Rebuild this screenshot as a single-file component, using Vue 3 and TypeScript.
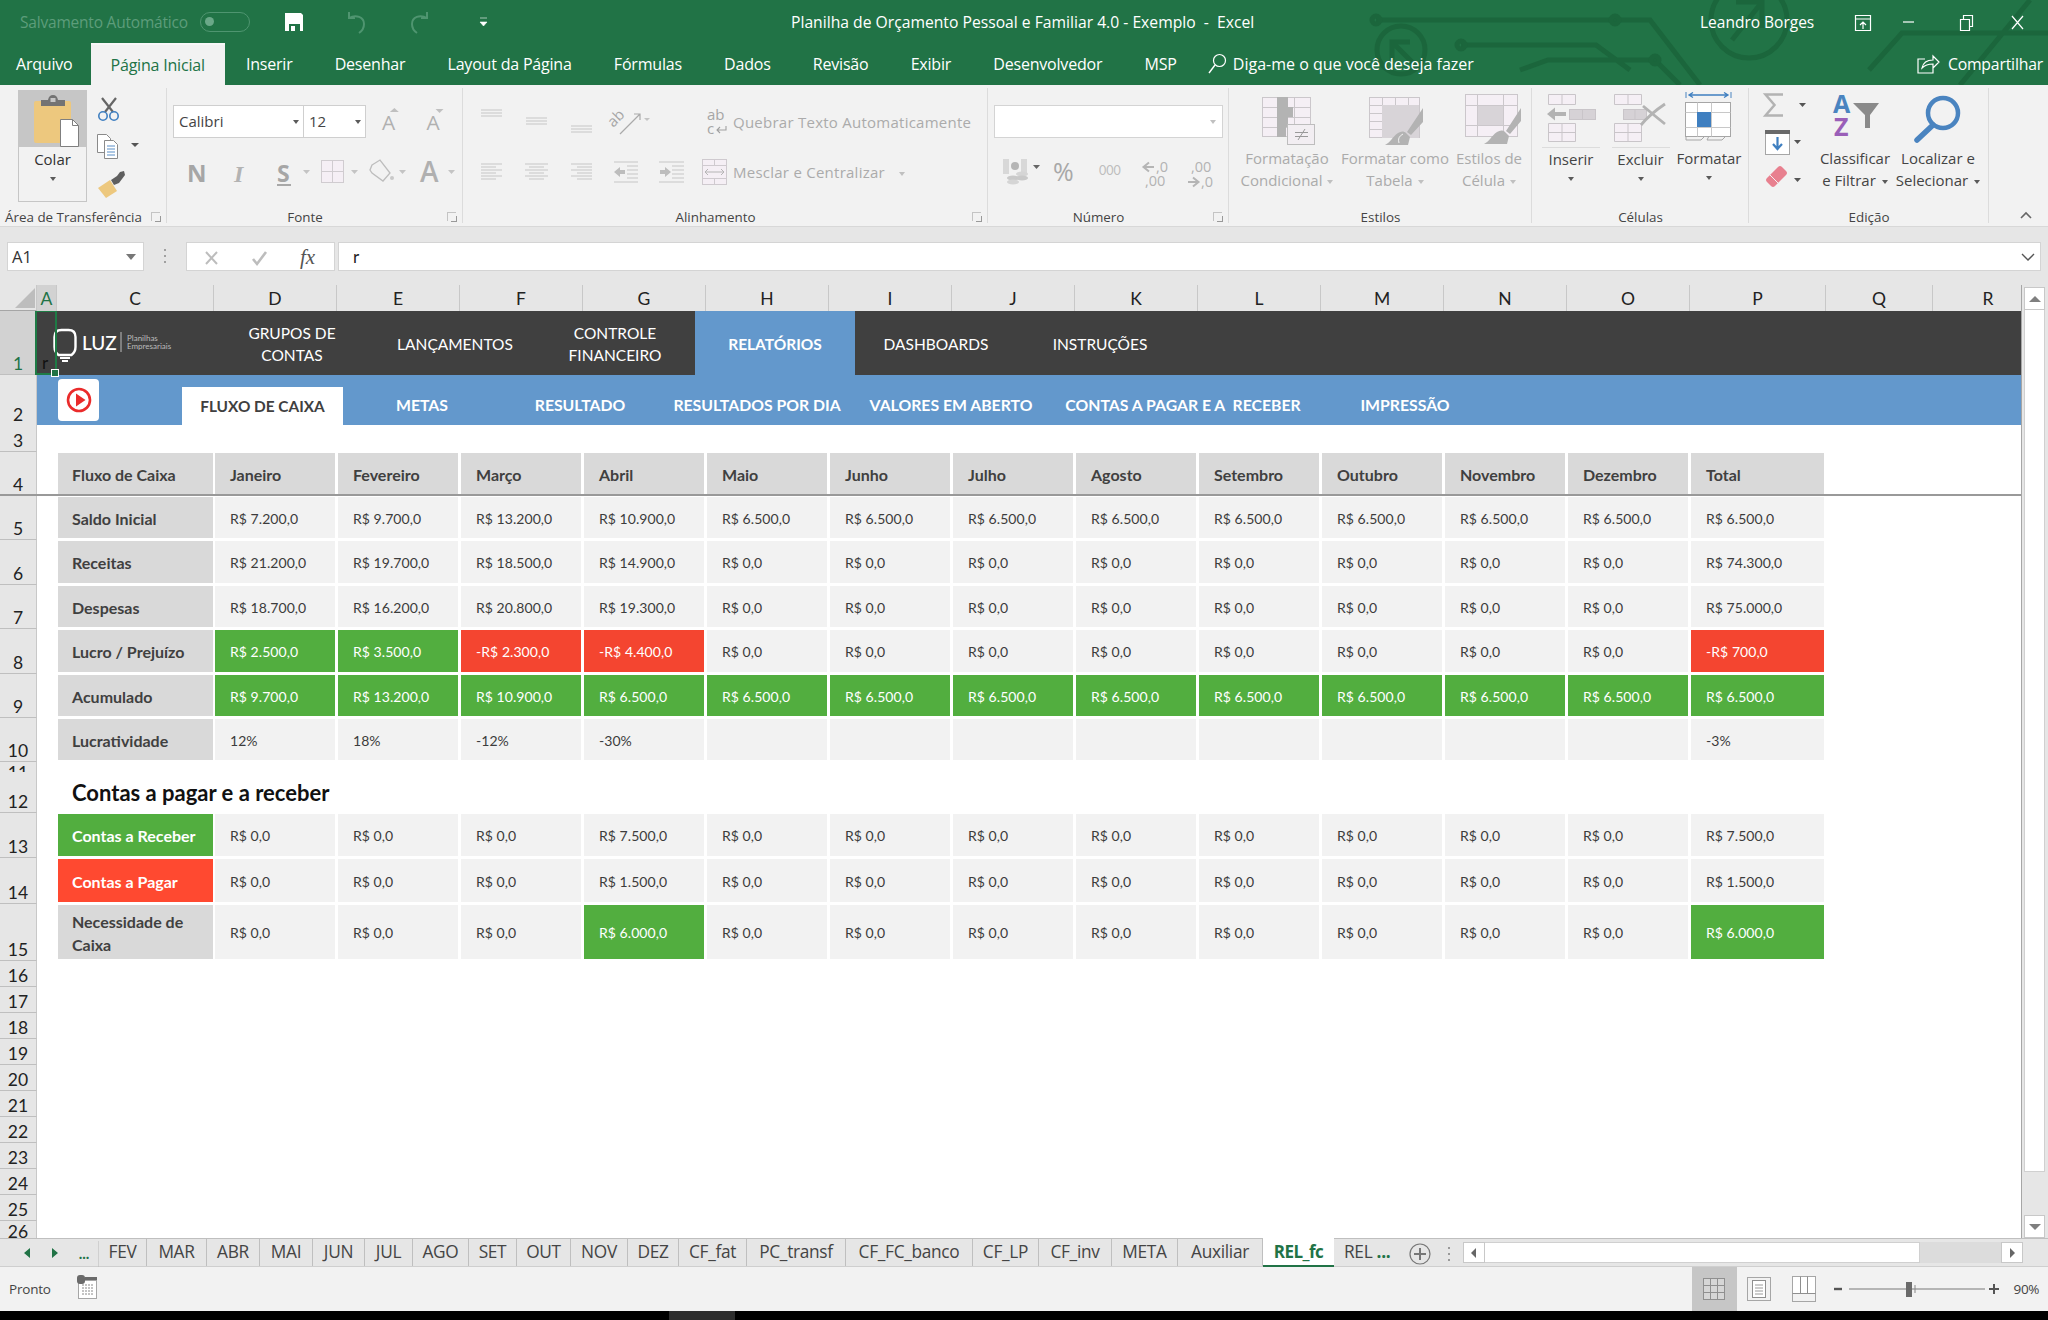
<template>
  <div class="app">
    <!-- titlebar + tabs share the green -->
    <div class="head">
      <svg class="circuit" width="760" height="85" viewBox="1288 0 760 85">
        <g fill="none" stroke="#1b663c" stroke-width="5">
          <path d="M1376 20H1650L1700 85M1461 45H1596L1630 70M1520 70L1548 60H1655L1680 85" />
          <circle cx="1376" cy="20" r="4" /><circle cx="1615" cy="20" r="4" />
          <circle cx="1461" cy="45" r="4" /><circle cx="1655" cy="60" r="4" />
          <circle cx="1401" cy="50" r="24" /><path d="M1392 60V42H1410M1392 42L1416 66" />
          <circle cx="1749" cy="20" r="38" /><path d="M1736 2H1762V28M1762 2L1732 40" />
          <path d="M1869 70L1902 33H2048M1960 85L2030 0" />
        </g>
      </svg>
      <div class="titlebar">
        <span class="autosave">Salvamento Automático</span>
        <span class="toggle"><i></i></span>
        <svg class="qa" width="240" height="24" viewBox="0 0 240 24">
          <path d="M1 3h16l2 2v16H1z" fill="#fff" /><path d="M5 14h11v7H5z" fill="#217346" /><path d="M7 16h4v5H7z" fill="#fff" />
          <path d="M71 7H65V1M65 7c7-4 15-1 15 6 0 4-2 7-5 9" transform="translate(0 1)" fill="none" stroke="#4f9570" stroke-width="2" />
          <path d="M137 7h6V1M143 7c-7-4-15-1-15 6 0 4 2 7 5 9" transform="translate(0 1)" fill="none" stroke="#4f9570" stroke-width="2" />
          <path d="M196 8h7M196 12h7l-3.500 4z" fill="#fff" stroke="#fff" stroke-width=".6" />
        </svg>
        <span class="doc-title">Planilha de Orçamento Pessoal e Familiar 4.0 - Exemplo &nbsp;-&nbsp; Excel</span>
        <span class="user">Leandro Borges</span>
        <svg class="win" width="198" height="24" viewBox="1850 8 198 24">
          <g fill="none" stroke="#fff" stroke-width="1.200">
            <path d="M1857.500 13.500h15v15h-15zM1857.500 17h15M1865 27v-7M1862 23l3-3 3 3" />
            <path d="M1905 20h11" />
            <path d="M1962.500 17.500h9v11h-9zM1965.500 17v-3.500h9v11H1972" />
            <path d="M2014 14l11 13M2025 14l-11 13" />
          </g>
        </svg>
      </div>
      <div class="tabsrow">
        <span v-for="t in menu" :key="t" class="menu" :class="{ active: t === 'Página Inicial' }">{{ t }}</span>
        <svg class="tell-icon" width="20" height="22" viewBox="0 0 20 22">
          <circle cx="12.500" cy="7.500" r="6" fill="none" stroke="#fff" stroke-width="1.200" /><path d="M8 12L2 20" stroke="#fff" stroke-width="1.400" />
        </svg>
        <span class="tell">Diga-me o que você deseja fazer</span>
        <svg class="share-icon" width="24" height="22" viewBox="0 0 24 22">
          <path d="M9 6H2v14h15v-7M6 15c1-5 5-8 11-8V3l6 6-6 6v-4c-5 0-8 1-11 4z" fill="none" stroke="#fff" stroke-width="1.200" />
        </svg>
        <span class="share">Compartilhar</span>
      </div>
    </div>

    <!-- ribbon -->
    <div class="ribbon">
      <section class="grp g-clip">
        <div class="body">
          <div class="paste">
            <svg class="paste-top" width="67" height="56" viewBox="0 0 67 56">
              <rect x="15" y="10" width="37" height="42" rx="2" fill="#edc87e" />
              <path d="M22 15v-6h7q1-5 5-5t5 5h7v6z" fill="#737373" /><rect x="31.500" y="7" width="5" height="4" fill="#c6c6c6" />
              <path d="M41.500 28.500h12l6 6v21h-18z" fill="#fff" stroke="#7f7f7f" /><path d="M53.500 28.500v6h6" fill="none" stroke="#7f7f7f" />
            </svg>
            <span class="paste-label">Colar</span>
            <span class="caret dark"></span>
          </div>
          <svg width="56" height="112" viewBox="0 0 56 112">
            <path d="M15 8l11 14M29 8L18 22" stroke="#666" stroke-width="2.200" />
            <circle cx="16" cy="26" r="4.200" fill="none" stroke="#3f7fc0" stroke-width="1.600" /><circle cx="27" cy="26" r="4.200" fill="none" stroke="#3f7fc0" stroke-width="1.600" />
            <path d="M10.500 44.500h9l4 4v14h-13z" fill="#fff" stroke="#8a8a8a" />
            <path d="M17.500 50.500h9l4 4v14h-13z" fill="#fff" stroke="#8a8a8a" />
            <path d="M20 56h8M20 59h8M20 62h8M20 65h8" stroke="#5b8fc7" />
            <path d="M44 53h8l-4 4z" fill="#555" />
            <path d="M11 98l12-8 7 11-11 7z" fill="#edc87e" /><path d="M24 90l6-4 3-4 4-1 1 4-3 4-3 4-5 2z" fill="#5f5f5f" />
          </svg>
        </div>
        <div class="glabel">Área de Transferência<i class="launcher"></i></div>
      </section>

      <section class="grp g-font">
        <div class="body col">
          <div class="r1">
            <div class="fontbox">
              <span class="fb-name">Calibri<i class="caret dark"></i></span>
              <span class="fb-size">12<i class="caret dark"></i></span>
            </div>
            <svg width="90" height="34" viewBox="0 0 90 34">
              <text x="8" y="25" class="ic-a">A</text><path d="M16 7h9l-4.500-4z" fill="#c0c0c0" />
              <text x="53" y="25" class="ic-a">A</text><path d="M62 4h8l-4 4z" fill="#c0c0c0" />
            </svg>
          </div>
          <svg class="font-row2" width="296" height="36" viewBox="0 0 296 36">
            <text x="20" y="25" class="ic-b">N</text>
            <text x="67" y="25" class="ic-i">I</text>
            <text x="110" y="25" class="ic-s">S</text><path d="M110 28h14" stroke="#a8a8a8" stroke-width="2" />
            <path d="M136 13h7l-3.500 4zM184 13h7l-3.500 4zM232 13h7l-3.500 4zM281 13h7l-3.500 4z" fill="#c4c4c4" />
            <rect x="154.500" y="3.500" width="22" height="22" fill="#f5eff5" stroke="#d0ccd0" /><path d="M165.500 3.500v22M154.500 14.500h22" stroke="#d0ccd0" />
            <path d="M205 8l8-5 10 13-7 8-11-8-2-3z" fill="none" stroke="#bdbdbd" stroke-width="1.300" /><circle cx="225" cy="21" r="2" fill="#c9c9c9" />
            <text x="253" y="25" class="ic-big">A</text>
          </svg>
        </div>
        <div class="glabel shift">Fonte<i class="launcher"></i></div>
      </section>

      <section class="grp g-align">
        <div class="body col">
          <div class="al-row">
            <svg width="268" height="34" viewBox="0 0 268 34">
              <g stroke="#c6c6c6" stroke-width="1.200">
                <path d="M18 5h21M18 8h21M18 11h21M63 13h21M63 16h21M63 19h21M108 21h21M108 24h21M108 27h21" />
              </g>
              <text transform="rotate(-45 158 18)" x="149" y="16" class="ic-ab">ab</text>
              <path d="M157 29L177 9M171 9h6v6" fill="none" stroke="#aaa" stroke-width="1.200" /><path d="M181 13h6l-3 3z" fill="#c4c4c4" />
              <text x="244" y="15" class="ic-ab">ab</text><text x="244" y="29" class="ic-ab">c</text>
              <path d="M263 21v4h-9M257 22l-3 3 3 3" fill="none" stroke="#a0a0a0" stroke-width="1.100" />
            </svg>
            <span class="al-text">Quebrar Texto Automaticamente</span>
          </div>
          <div class="al-row second">
            <svg width="268" height="34" viewBox="0 0 268 34">
              <g stroke="#c6c6c6" stroke-width="1.200" fill="none">
                <path d="M18 9h21M18 12h15M18 15h21M18 18h15M18 21h21M18 24h15" />
                <path d="M62 9h23M66 12h15M62 15h23M66 18h15M62 21h23M66 24h15" />
                <path d="M108 9h21M114 12h15M108 15h21M114 18h15M108 21h21M114 24h15" />
                <path d="M151 7h24M164 11h11M164 15h11M164 19h11M164 23h11M151 27h24" />
                <path d="M196 7h25M209 11h12M209 15h12M209 19h12M209 23h12M196 27h25" />
              </g>
              <path d="M151 17l6-5v3h5v4h-5v3zM208 17l-6-5v3h-5v4h5v3z" fill="#bdbdbd" />
              <rect x="239.500" y="4.500" width="24" height="25" fill="#f5eff5" stroke="#cfcacf" />
              <path d="M239.500 10.500h24M239.500 23.500h24M251.500 4.500v6M251.500 23.500v6" stroke="#cfcacf" />
              <path d="M242 17h19M245 14l-3 3 3 3M258 14l3 3-3 3" fill="none" stroke="#b5b5b5" />
            </svg>
            <span class="al-text merge">Mesclar e Centralizar<i class="caret"></i></span>
          </div>
        </div>
        <div class="glabel shift">Alinhamento<i class="launcher"></i></div>
      </section>

      <section class="grp g-num">
        <div class="body col">
          <div class="numbox"><i class="caret"></i></div>
          <svg class="num-row" width="240" height="36" viewBox="0 0 240 36">
            <rect x="15" y="4" width="24" height="15" fill="#d8d8d8" /><rect x="21" y="4" width="12" height="15" fill="#f2f2f2" /><circle cx="27" cy="11" r="4" fill="#b5b5b5" />
            <ellipse cx="25" cy="23" rx="6" ry="2.500" fill="#c9c9c9" /><ellipse cx="25" cy="27" rx="6" ry="2.500" fill="#d5d5d5" /><ellipse cx="34" cy="19" rx="6" ry="2.500" fill="#d5d5d5" /><ellipse cx="34" cy="23" rx="6" ry="2.500" fill="#c9c9c9" />
            <path d="M45 10h7l-3.500 4z" fill="#666" />
            <text x="65" y="26" class="ic-pct">%</text>
            <text x="111" y="20" class="ic-zero">000</text>
            <path d="M156 12h10M161 7.500L155.500 12l5.500 4.500" fill="none" stroke="#b5b5b5" stroke-width="2" />
            <text x="168" y="17" class="ic-dec">,0</text><text x="157" y="31" class="ic-dec">,00</text>
            <text x="203" y="17" class="ic-dec">,00</text>
            <path d="M200 27h10M205 22.500l5.500 4.500-5.500 4.500" fill="none" stroke="#b5b5b5" stroke-width="2" /><text x="213" y="32" class="ic-dec">,0</text>
          </svg>
        </div>
        <div class="glabel shift">Número<i class="launcher"></i></div>
      </section>

      <section class="grp g-style">
        <div class="body">
          <div class="bigbtn st1 off">
            <svg width="54" height="52" viewBox="0 0 54 52">
              <rect x=".5" y=".5" width="48" height="39" fill="#f5eff5" stroke="#cbc7cb" />
              <path d="M.5 10.500h48M.5 20.500h48M.5 30.500h48M16.500.5v39M32.500.5v39" stroke="#cbc7cb" />
              <path d="M15 0h11v10h5v10h-5v10h-2v10h-9z" fill="#b3b3b3" />
              <rect x="25.500" y="27.500" width="27" height="20" fill="#f2eef2" stroke="#bdbdbd" />
              <path d="M33 35.500h13M33 39.500h13M36 43l7-11" stroke="#999" fill="none" />
            </svg>
            <span>Formatação</span><span>Condicional<i class="caret"></i></span>
          </div>
          <div class="bigbtn st2 off">
            <svg width="54" height="52" viewBox="0 0 54 52">
              <rect x=".5" y=".5" width="50" height="40" fill="#f5eff5" stroke="#cbc7cb" />
              <path d="M.5 8.500h50M.5 16.500h50M.5 24.500h50M.5 32.500h50M13.500.5v40M26.500.5v40M39.500.5v40" stroke="#cbc7cb" />
              <rect x="13" y="8" width="37" height="33" fill="#d8d4d8" />
              <path d="M54 11v14L42 38l-4-3zM37 36l4 4-2 8H16c6-3 7-8 13-12 3-2 6-2 8 0z" fill="#b3b3b3" />
              <path d="M30 46q-2-6 4-9" stroke="#f2f2f2" fill="none" />
            </svg>
            <span>Formatar como</span><span>Tabela<i class="caret"></i></span>
          </div>
          <div class="bigbtn st3 off">
            <svg width="56" height="54" viewBox="0 0 56 54">
              <rect x=".5" y=".5" width="52" height="42" fill="#f5eff5" stroke="#cbc7cb" />
              <path d="M.5 11.500h52M.5 31.500h52M12.500.5v42M38.500.5v42" stroke="#cbc7cb" />
              <rect x="13" y="12" width="25" height="19" fill="#d8d4d8" />
              <path d="M56 14v13L45 40l-4-3zM40 38l4 4-2 8H19c6-3 7-8 13-12 3-2 6-2 8 0z" fill="#b3b3b3" />
            </svg>
            <span>Estilos de</span><span>Célula<i class="caret"></i></span>
          </div>
        </div>
        <div class="glabel">Estilos</div>
      </section>

      <section class="grp g-cells">
        <div class="body">
          <div class="bigbtn cell1">
            <svg width="52" height="52" viewBox="0 0 52 52">
              <path d="M3.500.5h27v10h-27zM17 .5v10M3.500 29.500h27v18h-27zM17 29.500v18M3.500 38.500h27" fill="#f5eff5" stroke="#c9c5c9" />
              <rect x="24.500" y="15.500" width="26" height="10" fill="#d6d2d6" stroke="#c9c5c9" /><path d="M37.500 15.500v10" stroke="#c9c5c9" />
              <path d="M2 20l8-6.500v4.500h11v4H10v4.500z" fill="#b3b3b3" />
            </svg>
            <em class="rule"></em>
            <span>Inserir</span><i class="caret dark"></i>
          </div>
          <div class="bigbtn cell2">
            <svg width="54" height="52" viewBox="0 0 54 52">
              <path d="M.5.5h27v10H.5zM14 .5v10M.5 29.500h27v18H.5zM14 29.500v18M.5 38.500h27" fill="#f5eff5" stroke="#c9c5c9" />
              <rect x="9.500" y="15.500" width="23" height="10" fill="#d6d2d6" stroke="#c9c5c9" /><path d="M21 15.500v10" stroke="#c9c5c9" />
              <path d="M29 12q12 10 22 18M51 10Q36 20 27 31" fill="none" stroke="#b3b3b3" stroke-width="2.800" />
            </svg>
            <em class="rule"></em>
            <span>Excluir</span><i class="caret dark"></i>
          </div>
          <div class="bigbtn cell3">
            <svg width="48" height="52" viewBox="0 0 48 52">
              <path d="M1 0v6M46 0v6" stroke="#4a84c0" /><path d="M4 3h39M8 .5L4 3l4 2.500M39 .5L43 3l-4 2.500" fill="none" stroke="#3f7fc0" stroke-width="1.300" />
              <rect x=".5" y="10.500" width="45" height="34" fill="#fff" stroke="#a6a6a6" />
              <path d="M.5 20.500h45M.5 35.500h45M12.500 10.500v34M26.500 10.500v34" stroke="#c8c8c8" />
              <rect x="12" y="20" width="14" height="15" fill="#3f7fc0" />
              <path d="M1 44v4h15l4-4M24 44l-2 4h15l4-4" fill="none" stroke="#a6a6a6" />
            </svg>
            <span>Formatar</span><i class="caret dark"></i>
          </div>
        </div>
        <div class="glabel">Células</div>
      </section>

      <section class="grp g-edit">
        <div class="body">
          <svg class="edit-small" width="70" height="112" viewBox="0 0 70 112">
            <path d="M35 5.500H17.500l9 10.500-9 10.500H35" transform="translate(-1 -1)" fill="none" stroke="#b3b3b3" stroke-width="2.500" />
            <path d="M50 13h7l-3.500 4z" fill="#555" />
            <rect x="16.500" y="40.500" width="24" height="24" fill="#fff" stroke="#a6a6a6" /><rect x="16" y="40" width="25" height="4" fill="#6a6a6a" />
            <path d="M28.500 47v11M24 54l4.500 5 4.500-5" fill="none" stroke="#3f7fc0" stroke-width="2.200" />
            <path d="M45 50h7l-3.500 4z" fill="#555" />
            <path d="M18 88l11-11q2-2 4 0l4 4q2 2 0 4L26 96q-2 2-4 0l-4-4q-2-2 0-4z" fill="#e8808f" /><path d="M21 85l8 8" stroke="#f5f0f0" />
            <path d="M45 88h7l-3.500 4z" fill="#555" />
          </svg>
          <div class="bigbtn sort">
            <svg width="52" height="52" viewBox="0 0 52 52">
              <text x="4" y="19" class="ic-az blue">A</text><text x="5" y="42" class="ic-az purple">Z</text>
              <path d="M24 9h26L41 21v13h-5V21z" fill="#8a8a8a" />
            </svg>
            <span>Classificar</span><span>e Filtrar<i class="caret dark"></i></span>
          </div>
          <div class="bigbtn find">
            <svg width="52" height="52" viewBox="0 0 52 52">
              <circle cx="31" cy="19" r="15" fill="none" stroke="#4a84c0" stroke-width="4.500" />
              <path d="M21 31L5 46" stroke="#4a84c0" stroke-width="5.500" stroke-linecap="round" />
            </svg>
            <span>Localizar e</span><span>Selecionar<i class="caret dark"></i></span>
          </div>
        </div>
        <div class="glabel">Edição</div>
      </section>
      <svg class="collapse" width="14" height="10" viewBox="0 0 14 10"><path d="M2 8l5-5 5 5" fill="none" stroke="#666" stroke-width="1.600" /></svg>
    </div>

    <!-- formula bar -->
    <div class="fbar">
      <div class="namebox">A1<i class="caret big"></i></div>
      <span class="dots"></span>
      <div class="fxbtns">
        <svg width="149" height="29" viewBox="0 0 149 29">
          <path d="M19 9l11 12M30 9L19 21" stroke="#bdbdbd" stroke-width="2" fill="none" />
          <path d="M66 16l4 5 9-12" stroke="#bdbdbd" stroke-width="2.600" fill="none" />
          <text x="113" y="21" class="ic-fx">fx</text>
        </svg>
      </div>
      <div class="finput">r<svg class="fchev" width="16" height="10" viewBox="0 0 16 10"><path d="M2 2l6 6 6-6" fill="none" stroke="#555" stroke-width="1.400" /></svg></div>
    </div>

    <!-- grid -->
    <div class="workspace">
      <div class="gridcol">
        <div class="colhdr">
          <div class="corner"><svg width="37" height="26" viewBox="0 0 37 26"><path d="M35 3v20H15z" fill="#bdbdbd" /></svg></div>
          <div v-for="c in colLetters" :key="c" class="ch" :class="{ sel: c === 'A' }">{{ c }}</div>
        </div>
        <div class="sheet">
          <div class="a1box"><span>r</span><i></i></div>
          <div v-for="r in rows" :key="r.n" class="row" :class="{ frozen: r.n === 4 }" :style="{ height: r.h + 'px' }">
            <div class="rh" :class="{ sel: r.n === 1 }"><span>{{ r.n }}</span></div>

            <div v-if="r.n === 1" class="nav1">
              <svg class="logo" width="177" height="64" viewBox="37 311 177 64">
                <path d="M54.500 337q0-7 7-7h7q7 0 7 7v10q0 5-4 8H58.500q-4-3-4-8z" fill="none" stroke="#fff" stroke-width="2.400" />
                <path d="M60 358h10M62 361h6" stroke="#fff" stroke-width="1.800" />
                <text x="82" y="350" class="luz">LUZ</text>
                <path d="M121 332v20" stroke="#bbb" />
                <text x="127" y="341" class="luz-s">Planilhas</text><text x="127" y="349" class="luz-s">Empresariais</text>
              </svg>
              <div v-for="n in nav1" :key="n.t" class="nav1-item" :class="{ on: n.on }" :style="{ width: n.w + 'px', marginLeft: (n.ml || 0) + 'px' }">
                <span v-for="l in n.t.split('|')" :key="l">{{ l }}</span>
              </div>
            </div>

            <div v-else-if="r.n === 2" class="nav2">
              <div class="playbtn">
                <svg width="26" height="26" viewBox="0 0 26 26"><circle cx="13" cy="13" r="11" fill="none" stroke="#ea2b2b" stroke-width="2.600" /><path d="M10 6.500L19.500 13 10 19.500z" fill="#ea2b2b" /></svg>
              </div>
              <div class="nav2-on">FLUXO DE CAIXA</div>
              <div v-for="n in nav2" :key="n.t" class="nav2-item" :style="{ width: n.w + 'px' }">{{ n.t }}</div>
            </div>

            <template v-else-if="r.label">
              <div class="a-col"></div>
              <div class="cell label" :class="[r.lc, { wrap: r.n === 15 }]"><span>{{ r.label }}</span></div>
              <div v-for="(c, i) in r.cells" :key="i" class="cell" :class="[c.k, { hd: r.n === 4 }]">{{ c.t }}</div>
            </template>

            <div v-else-if="r.n === 12" class="sect">Contas a pagar e a receber</div>
          </div>
        </div>
      </div>
      <div class="vscroll">
        <div class="vbtn"><svg width="14" height="8" viewBox="0 0 14 8"><path d="M1 7l6-6 6 6z" fill="#7f7f7f" /></svg></div>
        <div class="vthumb"></div>
        <div class="vbtn low"><svg width="14" height="8" viewBox="0 0 14 8"><path d="M1 1l6 6 6-6z" fill="#7f7f7f" /></svg></div>
      </div>
    </div>

    <!-- sheet tabs -->
    <div class="tabstrip">
      <svg class="tabnav" width="99" height="29" viewBox="0 0 99 29">
        <path d="M30 9v10l-6-5zM52 9v10l6-5z" fill="#217346" />
        <text x="84" y="20" class="ic-more">...</text>
        <path d="M99 2v26" stroke="#bbb" />
      </svg>
      <div v-for="t in sheets" :key="t.t" class="stab" :class="{ active: t.on }" :style="{ width: t.w + 'px' }">{{ t.t }}</div>
      <span class="stab more">REL <b>...</b></span>
      <svg class="addsheet" width="56" height="29" viewBox="0 0 56 29">
        <circle cx="12" cy="15" r="10" fill="none" stroke="#777" stroke-width="1.200" /><path d="M12 9v12M6 15h12" stroke="#777" stroke-width="2" />
        <path d="M41 8v2M41 14v2M41 20v2" stroke="#999" stroke-width="2" />
      </svg>
      <div class="hscroll">
        <div class="hbtn"><svg width="6" height="10" viewBox="0 0 6 10"><path d="M5 0v10L0 5z" fill="#666" /></svg></div>
        <div class="hthumb"></div>
        <div class="htrack"></div>
        <div class="hbtn"><svg width="6" height="10" viewBox="0 0 6 10"><path d="M1 0v10l5-5z" fill="#666" /></svg></div>
      </div>
    </div>

    <!-- status -->
    <div class="status">
      <span class="ready">Pronto</span>
      <svg class="macro" width="22" height="26" viewBox="0 0 22 26">
        <rect x="2.500" y="6.500" width="18" height="18" fill="#fff" stroke="#a6a6a6" />
        <rect x="1" y="1" width="8" height="9" rx="3" fill="#6a6a6a" /><path d="M9 3h12v3H9z" fill="#6a6a6a" />
        <path d="M6 11h11M6 14h11M6 17h11M6 20h11" stroke="#888" stroke-dasharray="2 1" />
      </svg>
      <div class="views">
        <div class="view on">
          <svg width="22" height="22" viewBox="0 0 22 22"><rect x=".5" y=".5" width="21" height="21" fill="#d6d6d6" stroke="#8f8f8f" /><path d="M.5 7.500h21M.5 14.500h21M7.500.5v21M14.500.5v21" stroke="#8f8f8f" /></svg>
        </div>
        <svg class="view-i" width="24" height="24" viewBox="0 0 24 24"><rect x=".5" y=".5" width="23" height="23" fill="#f2f2f2" stroke="#a6a6a6" /><rect x="5.500" y="3.500" width="13" height="17" fill="#fff" stroke="#8f8f8f" /><path d="M8 8h8M8 11h8M8 14h8M8 17h8" stroke="#9a9a9a" /></svg>
        <svg class="view-i" width="24" height="26" viewBox="0 0 24 26"><rect x=".5" y=".5" width="23" height="25" fill="#fff" stroke="#a6a6a6" /><path d="M8.500 .5v17M15.500 .5v17M.5 17.500h23" stroke="#8f8f8f" /><rect x="1" y="18" width="22" height="7" fill="#f2f2f2" /></svg>
      </div>
      <svg class="zoom" width="166" height="20" viewBox="0 0 166 20">
        <path d="M0 10h8" stroke="#555" stroke-width="2.400" />
        <path d="M15 10h136" stroke="#b5b5b5" stroke-width="2" />
        <path d="M81 6v8" stroke="#888" /><rect x="72" y="3" width="6" height="15" fill="#6a6a6a" />
        <path d="M155 10h10M160 5v10" stroke="#555" stroke-width="2" />
      </svg>
      <span class="pct">90%</span>
    </div>
    <div class="blackbar"><i></i></div>
  </div>
</template>

<script setup lang="ts">
interface Cell { t: string; k?: string }
interface Row { n: number; h: number; label?: string; lc?: string; cells?: Cell[] }

const menu = ['Arquivo', 'Página Inicial', 'Inserir', 'Desenhar', 'Layout da Página', 'Fórmulas', 'Dados', 'Revisão', 'Exibir', 'Desenvolvedor', 'MSP']
const colLetters = ['A', 'C', 'D', 'E', 'F', 'G', 'H', 'I', 'J', 'K', 'L', 'M', 'N', 'O', 'P', 'Q', 'R']

const nav1 = [
  { t: 'GRUPOS DE|CONTAS', w: 156 },
  { t: 'LANÇAMENTOS', w: 170 },
  { t: 'CONTROLE|FINANCEIRO', w: 150 },
  { t: 'RELATÓRIOS', w: 160, on: true, ml: 5 },
  { t: 'DASHBOARDS', w: 162 },
  { t: 'INSTRUÇÕES', w: 166 }
]
const nav2 = [
  { t: 'METAS', w: 158 },
  { t: 'RESULTADO', w: 158 },
  { t: 'RESULTADOS POR DIA', w: 196 },
  { t: 'VALORES EM ABERTO', w: 192 },
  { t: 'CONTAS A PAGAR E A  RECEBER', w: 272 },
  { t: 'IMPRESSÃO', w: 172 }
]
const sheets = [
  { t: 'FEV', w: 48 }, { t: 'MAR', w: 60 }, { t: 'ABR', w: 53 }, { t: 'MAI', w: 53 }, { t: 'JUN', w: 52 },
  { t: 'JUL', w: 48 }, { t: 'AGO', w: 56 }, { t: 'SET', w: 48 }, { t: 'OUT', w: 54 }, { t: 'NOV', w: 57 },
  { t: 'DEZ', w: 51 }, { t: 'CF_fat', w: 68 }, { t: 'PC_transf', w: 99 }, { t: 'CF_FC_banco', w: 127 },
  { t: 'CF_LP', w: 66 }, { t: 'CF_inv', w: 73 }, { t: 'META', w: 66 }, { t: 'Auxiliar', w: 85 }, { t: 'REL_fc', w: 71, on: true }
]

const money = (v: string) => (v.startsWith('-') ? '-R$ ' + v.slice(1) + ',0' : 'R$ ' + v + ',0')
// "g" / "r" suffix after the value marks the conditional fill
function line(vals: string[]): Cell[] {
  return vals.map((v) => {
    const m = v.match(/^(.*)\s([gr])$/)
    return m ? { t: money(m[1]), k: m[2] } : { t: money(v) }
  })
}
const rep = (v: string, n: number) => Array<string>(n).fill(v)

const heads = ['Janeiro', 'Fevereiro', 'Março', 'Abril', 'Maio', 'Junho', 'Julho', 'Agosto', 'Setembro', 'Outubro', 'Novembro', 'Dezembro', 'Total']

const rows: Row[] = [
  { n: 1, h: 64 },
  { n: 2, h: 50 },
  { n: 3, h: 27 },
  { n: 4, h: 44, label: 'Fluxo de Caixa', cells: heads.map((t) => ({ t })) },
  { n: 5, h: 44, label: 'Saldo Inicial', cells: line(['7.200', '9.700', '13.200', '10.900', ...rep('6.500', 9)]) },
  { n: 6, h: 45, label: 'Receitas', cells: line(['21.200', '19.700', '18.500', '14.900', ...rep('0', 8), '74.300']) },
  { n: 7, h: 44, label: 'Despesas', cells: line(['18.700', '16.200', '20.800', '19.300', ...rep('0', 8), '75.000']) },
  { n: 8, h: 45, label: 'Lucro / Prejuízo', cells: line(['2.500 g', '3.500 g', '-2.300 r', '-4.400 r', ...rep('0', 8), '-700 r']) },
  { n: 9, h: 44, label: 'Acumulado', cells: line(['9.700 g', '13.200 g', '10.900 g', ...rep('6.500 g', 10)]) },
  { n: 10, h: 44, label: 'Lucratividade', cells: [{ t: '12%' }, { t: '18%' }, { t: '-12%' }, { t: '-30%' }, ...rep('', 8).map((t) => ({ t })), { t: '-3%' }] },
  { n: 11, h: 10 },
  { n: 12, h: 41 },
  { n: 13, h: 45, label: 'Contas a Receber', lc: 'lg', cells: line(['0', '0', '0', '7.500', ...rep('0', 8), '7.500']) },
  { n: 14, h: 46, label: 'Contas a Pagar', lc: 'lr', cells: line(['0', '0', '0', '1.500', ...rep('0', 8), '1.500']) },
  { n: 15, h: 57, label: 'Necessidade de Caixa', cells: line(['0', '0', '0', '6.000 g', ...rep('0', 8), '6.000 g']) },
  ...Array.from({ length: 10 }, (_, i) => ({ n: 16 + i, h: 26 })),
  { n: 26, h: 17 }
]
</script>

<style>
html, body { margin: 0; background: #e6e6e6; }
</style>

<style scoped>
.app {
  width: 2048px;
  height: 1320px;
  display: flex;
  flex-direction: column;
  overflow: hidden;
  font-family: "Open Sans", "Noto Sans", sans-serif;
  color: #333;
  background: #e6e6e6;
}
i, em { font-style: normal; }

/* head */
.head { position: relative; height: 85px; background: #217346; color: #fff; flex: none; }
.circuit { position: absolute; left: 1288px; top: 0; }
.titlebar { position: relative; height: 43px; display: flex; align-items: center; }
.autosave { margin-left: 20px; width: 180px; font-size: 15.500px; letter-spacing: -.2px; color: #5d9d7b; white-space: nowrap; }
.toggle { width: 50px; height: 20px; border: 1px solid #4f9570; border-radius: 11px; display: flex; align-items: center; padding-left: 4px; box-sizing: border-box; }
.toggle i { width: 9px; height: 9px; border-radius: 50%; background: #6aa888; }
.qa { margin-left: 34px; }
.doc-title { margin-left: 267px; font-size: 15.700px; white-space: nowrap; width: 909px; }
.user { font-size: 15.500px; white-space: nowrap; width: 148px; }
.tabsrow { position: relative; height: 42px; display: flex; align-items: stretch; }
.menu { padding: 0 21.100px; font-size: 16px; line-height: 42px; white-space: nowrap; letter-spacing: -.2px; }
.menu:first-child { padding-left: 16px; padding-right: 18px; }
.menu.active { background: #f2f2f2; color: #217346; padding: 0 20px; border-top: 2px solid #f7f7f7; line-height: 40px; }
.tell-icon { margin-left: 9px; align-self: center; }
.tell { margin-left: 6px; font-size: 16px; line-height: 42px; white-space: nowrap; }
.share-icon { margin-left: auto; align-self: center; }
.share { margin: 0 5px 0 8px; font-size: 15.800px; line-height: 42px; letter-spacing: -.2px; }

/* ribbon */
.ribbon { height: 142px; flex: none; display: flex; background: #f2f2f2; border-bottom: 1px solid #d8d8d8; box-sizing: border-box; position: relative; font-size: 14px; }
.grp { flex: none; display: flex; flex-direction: column; position: relative; box-sizing: border-box; }
.grp::after { content: ""; position: absolute; right: 0; top: 3px; bottom: 3px; width: 1px; background: #dcdcdc; }
.body { height: 122px; display: flex; box-sizing: border-box; }
.col { flex-direction: column; }
.glabel { position: relative; height: 19px; line-height: 20px; text-align: center; font-size: 13.400px; color: #444; white-space: nowrap; }
.glabel.shift { padding-right: 20px; }
.launcher { position: absolute; right: 7px; top: 5px; width: 8px; height: 8px; border: 1px solid #c4c4c4; border-width: 1px 0 0 1px; }
.launcher::after { content: ""; position: absolute; right: -1px; bottom: -1px; width: 5px; height: 5px; border-right: 1px solid #999; border-bottom: 1px solid #999; }

.caret { display: inline-block; width: 0; height: 0; border: 3.500px solid transparent; border-top: 4px solid #c0c0c0; border-bottom: 0; vertical-align: middle; margin-left: 6px; }
.caret.dark { border-top-color: #5a5a5a; }
.caret.big { border-width: 6px 5px 0; border-top-color: #777; }

.g-clip { width: 167px; }
.g-clip .body { padding: 5px 0 0 18px; }
.g-clip .glabel { text-align: left; padding-left: 5px; }
.paste { width: 69px; height: 112px; border: 1px solid #c6c6c6; box-sizing: border-box; display: flex; flex-direction: column; align-items: center; }
.paste-top { background: #c6c6c6; display: block; flex: none; }
.paste-label { font-size: 15px; line-height: 22px; margin-top: 1px; color: #333; }
.paste .caret { margin: 7px 0 0; }

.g-font { width: 296px; }
.r1 { display: flex; align-items: center; margin: 20px 0 0 6px; height: 33px; }
.fontbox { width: 194px; height: 33px; background: #fff; border: 1px solid #cfcfcf; box-sizing: border-box; display: flex; font-size: 15px; line-height: 31px; color: #444; margin-right: 8px; }
.fb-name { width: 130px; padding-left: 5px; border-right: 1px solid #cfcfcf; box-sizing: border-box; position: relative; }
.fb-size { flex: 1; padding-left: 5px; position: relative; }
.fb-name .caret, .fb-size .caret { position: absolute; right: 4px; top: 14px; }
.font-row2 { margin-top: 19px; }
.ic-a { font: 400 21px "Open Sans", sans-serif; fill: #b0b0b0; }
.ic-b { font: 700 24px "Open Sans", sans-serif; fill: #a6a6a6; }
.ic-i { font: italic 700 24px "Liberation Serif", serif; fill: #b3b3b3; }
.ic-s { font: 700 23px "Open Sans", sans-serif; fill: #a6a6a6; }
.ic-big { font: 600 28px "Open Sans", sans-serif; fill: #b0b0b0; }
.ic-ab { font: 15px "Open Sans", sans-serif; fill: #a6a6a6; }

.g-align { width: 525px; }
.al-row { display: flex; align-items: center; height: 34px; margin-top: 20px; }
.al-row.second { margin-top: 16px; }
.al-text { margin-left: 2px; font-size: 15px; color: #ababab; white-space: nowrap; letter-spacing: .25px; }
.merge .caret { margin-left: 14px; }

.g-num { width: 241px; }
.numbox { margin: 20px 0 0 6px; width: 229px; height: 33px; background: #fff; border: 1px solid #d4d4d4; box-sizing: border-box; display: flex; align-items: center; justify-content: flex-end; padding-right: 6px; }
.num-row { margin-top: 17px; }
.ic-pct { font: 25px "Open Sans", sans-serif; fill: #a8a8a8; }
.ic-zero { font: 12.500px "Lato", sans-serif; fill: #bdbdbd; }
.ic-dec { font: 14.500px "Open Sans", sans-serif; fill: #b3b3b3; }

.bigbtn { display: flex; flex-direction: column; align-items: center; flex: none; font-size: 15px; line-height: 22px; white-space: nowrap; color: #444; box-sizing: border-box; position: relative; }
.bigbtn svg { flex: none; margin-bottom: 7px; }
.off { color: #ababab; }
.off .caret { margin-left: 5px; }
.g-style { width: 303px; }
.g-style .body { padding: 12px 0 0 8px; }
.st1 { width: 100px; }
.st2 { width: 110px; margin-left: 3px; }
.st3 { width: 72px; margin-left: 3px; }
.bigbtn.st1 svg { margin: 0 0 -2px 4px; }
.bigbtn.st2 svg { margin: 0 0 -2px 2px; }
.bigbtn.st3 svg { margin: -3px 0 -1px 8px; }

.g-cells { width: 217px; }
.g-cells .body { padding: 9px 0 0 4px; }
.cell1 { width: 70px; }
.cell2 { width: 69px; }
.cell3 { width: 68px; }
.g-cells .caret { margin: 7px 0 0; }
.rule { display: block; width: 58px; height: 1px; background: #dcdcdc; margin: -6px 0 0; }
.bigbtn.cell3 svg { margin-top: -2px; margin-bottom: 3px; }

.g-edit { width: 240px; }
.edit-small { margin: 5px 0 0 0; }
.sort { width: 72px; padding-top: 9px; }
.find { width: 92px; margin-left: 1px; padding-top: 9px; }
.bigbtn.sort svg, .bigbtn.find svg { margin-bottom: 1px; }
.ic-az { font: 700 25px "Open Sans", sans-serif; }
.blue { fill: #4a84c0; }
.purple { fill: #9a5fb8; }
.collapse { position: absolute; left: 2019px; top: 125px; }

/* formula bar */
.fbar { height: 58px; flex: none; display: flex; align-items: flex-start; padding: 15px 0 0 7px; box-sizing: border-box; background: #e6e6e6; }
.namebox { width: 137px; height: 29px; background: #fff; border: 1px solid #d4d4d4; box-sizing: border-box; font-size: 16.500px; line-height: 27px; padding-left: 4px; color: #333; display: flex; align-items: center; justify-content: space-between; padding-right: 7px; }
.namebox .caret { margin: 0; }
.dots { width: 42px; height: 29px; position: relative; }
.dots::after { content: ""; position: absolute; left: 20px; top: 7px; width: 2px; height: 2px; background: #a0a0a0; box-shadow: 0 6px 0 #a0a0a0, 0 12px 0 #a0a0a0; }
.fxbtns { width: 149px; height: 29px; background: #fff; border: 1px solid #d4d4d4; box-sizing: border-box; overflow: hidden; }
.ic-fx { font: italic 21px "Liberation Serif", serif; fill: #555; }
.finput { margin-left: 3px; width: 1703px; height: 29px; background: #fff; border: 1px solid #d4d4d4; box-sizing: border-box; font: 17px "Lato", sans-serif; line-height: 27px; padding-left: 14px; color: #222; position: relative; }
.fchev { position: absolute; right: 4px; top: 9px; }

/* sheet */
.workspace { flex: none; display: flex; height: 953px; background: #e6e6e6; }
.gridcol { width: 2021px; flex: none; overflow: hidden; border-right: 1px solid #a6a6a6; }
.colhdr { height: 26px; display: grid; grid-template-columns: 37px 20px 157px repeat(12, 123px) 136px 107px 110px; background: #e6e6e6; font: 17.500px "Lato", sans-serif; color: #222; text-align: center; line-height: 28px; }
.ch { border-right: 1px solid #c8c8c8; box-sizing: border-box; border-bottom: 1px solid #a6a6a6; }
.ch:last-child { border-right: 0; }
.corner { border-bottom: 1px solid #a6a6a6; border-right: 1px solid #c8c8c8; box-sizing: border-box; height: 26px; overflow: hidden; }
.corner svg { display: block; }
.ch.sel { background: #d2d2d2; color: #217346; border-bottom: 2px solid #217346; }
.sheet { position: relative; height: 927px; background: #fff; overflow: hidden; }
.row { display: grid; grid-template-columns: 37px 20px 157px repeat(12, 123px) 136px 195px; box-sizing: border-box; overflow: hidden; }
.rh { background: #e6e6e6; border-right: 1px solid #c8c8c8; border-bottom: 1px solid #bfbfbf; box-sizing: border-box; display: flex; align-items: flex-end; justify-content: center; font: 17.500px "Lato", sans-serif; color: #222; line-height: 21px; }
.rh.sel { background: #d2d2d2; color: #217346; }
.frozen { border-bottom: 0; position: relative; }
.frozen::after { content: ""; position: absolute; left: 0; right: 0; bottom: 0; height: 2px; background: #999; }
.a-col { background: #fff; }
.cell { font: 14px "Lato", sans-serif; color: #3c3c3c; background: #f2f2f2; border: solid #fff; border-width: 1px 2px 2px 1px; box-sizing: border-box; padding: 1px 0 0 15px; display: flex; align-items: center; white-space: nowrap; letter-spacing: .05px; }
.cell.g { background: #52ae3f; color: #fff; }
.cell.r { background: #f44530; color: #fff; }
.cell.label { background: #d9d9d9; font-weight: 700; font-size: 16px; color: #404040; padding-left: 14px; letter-spacing: 0; border-right-width: 1px; }
.cell.label.lg { background: #52ae3f; color: #fff; }
.cell.label.lr { background: #ff4930; color: #fff; }
.cell.wrap { white-space: normal; line-height: 23px; padding-right: 20px; }
.cell.hd { background: #d9d9d9; font-weight: 700; font-size: 16px; color: #404040; letter-spacing: 0; }
.sect { grid-column: 2 / -1; font: 700 22px "Lato", sans-serif; color: #111; padding: 7px 0 0 35px; }

.nav1 { grid-column: 2 / -1; display: flex; background: #404040; }
.logo { flex: none; display: block; }
.nav1-item { flex: none; display: flex; flex-direction: column; align-items: center; justify-content: center; color: #fff; font: 15.500px/22px "Lato", sans-serif; box-sizing: border-box; padding-top: 1px; }
.nav1-item.on { background: #6398cc; font-weight: 700; }
.luz { font: 500 19px "Lato", sans-serif; fill: #fff; }
.luz-s { font: 8px "Lato", sans-serif; fill: #bbb; }

.nav2 { grid-column: 2 / -1; display: flex; background: #6398cc; border-bottom: 1px solid #5b8fc7; box-sizing: border-box; position: relative; }
.playbtn { flex: none; width: 41px; height: 42px; margin: 4px 0 0 21px; background: #fff; border-radius: 4px; display: flex; align-items: center; justify-content: center; }
.nav2-on { flex: none; width: 161px; height: 38px; margin: 12px 0 -1px 83px; background: #fff; color: #404040; font: 700 15.400px/38px "Lato", sans-serif; text-align: center; }
.nav2-item { flex: none; color: #fff; font: 700 15.800px/59px "Lato", sans-serif; text-align: center; white-space: pre; height: 50px; }

.a1box { position: absolute; left: 35px; top: -1px; width: 22px; height: 65px; box-sizing: border-box; border: 2px solid #1e7b45; z-index: 2; font: 17px "Lato", sans-serif; color: #111; }
.a1box span { position: absolute; left: 5px; bottom: 0; }
.a1box i { position: absolute; right: -4px; bottom: -4px; width: 6px; height: 6px; background: #217346; border: 1px solid #fff; }

.vscroll { width: 26px; flex: none; display: flex; flex-direction: column; padding: 2px 3px 0 2px; box-sizing: border-box; }
.vbtn { height: 23px; background: #fff; border: 1px solid #c8c8c8; box-sizing: border-box; display: flex; align-items: center; justify-content: center; flex: none; }
.vthumb { height: 862px; background: #fff; border: 1px solid #d0d0d0; border-top: 0; box-sizing: border-box; flex: none; }
.vbtn.low { margin-top: auto; }

/* tabs */
.tabstrip { height: 29px; flex: none; display: flex; background: #e6e6e6; border-top: 1px solid #bfbfbf; border-bottom: 1px solid #cfcfcf; box-sizing: border-box; align-items: stretch; }
.tabnav { flex: none; }
.ic-more { font: 700 15px "Lato", sans-serif; fill: #217346; text-anchor: middle; }
.stab { flex: none; box-sizing: border-box; text-align: center; font-size: 17.300px; letter-spacing: -.3px; line-height: 26px; color: #444; border-right: 1px solid #bfbfbf; white-space: nowrap; }
.stab.active { background: #fff; color: #217346; font-weight: 700; font-size: 17px; border-bottom: 2px solid #217346; border-right: 0; letter-spacing: -.5px; margin-top: -1px; line-height: 28px; height: 29px; }
.stab.more { border: 0; padding-left: 10px; width: 74px; text-align: left; }
.stab.more b { color: #217346; }
.addsheet { flex: none; }
.hscroll { margin-left: -1px; width: 560px; display: flex; padding: 3px 0; box-sizing: border-box; }
.hbtn { width: 22px; background: #fff; border: 1px solid #c8c8c8; box-sizing: border-box; display: flex; align-items: center; justify-content: center; flex: none; }
.hthumb { width: 435px; background: #fff; border: 1px solid #d0d0d0; border-left: 0; box-sizing: border-box; }
.htrack { flex: 1; background: #dcdcdc; }

/* status */
.status { height: 44px; flex: none; display: flex; align-items: center; background: #f2f2f2; }
.ready { margin-left: 9px; font-size: 13.500px; letter-spacing: -.2px; color: #444; width: 67px; }
.macro { flex: none; margin-top: -4px; }
.views { margin-left: auto; display: flex; align-items: center; }
.view { width: 45px; height: 44px; background: #c6c6c6; display: flex; align-items: center; justify-content: center; }
.view-i { margin-left: 10px; }
.view-i + .view-i { margin-left: 21px; }
.zoom { margin-left: 18px; flex: none; }
.pct { margin: 0 9px 0 14px; font-size: 13.500px; letter-spacing: -.4px; color: #444; }
.blackbar { flex: 1; background: #000; position: relative; }
.blackbar i { position: absolute; left: 669px; top: 0; bottom: 0; width: 66px; background: #2d2d2d; }
</style>
